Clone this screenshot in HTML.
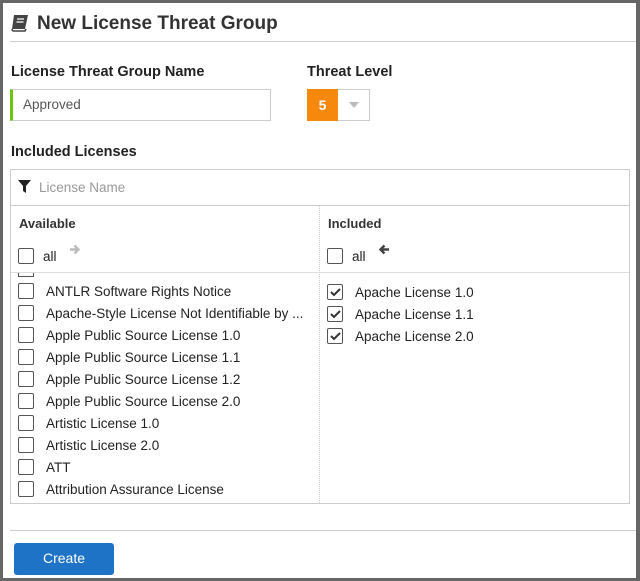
<!DOCTYPE html><html><head><style>
*{margin:0;padding:0;box-sizing:border-box}
body{width:640px;height:581px;background:#666;font-family:"Liberation Sans",sans-serif;color:#222;position:relative;overflow:hidden}
.p{position:absolute;left:3px;top:3px;width:633px;height:575px;background:#fff}
.a{position:absolute;white-space:nowrap}
.cb{position:absolute;width:16px;height:16px;border:1.5px solid #555;border-radius:2px;background:#fff}
.it{position:absolute;font-size:13.5px;color:#222;white-space:nowrap}
</style></head><body><div class="p"></div>
<svg class="a" style="left:10px;top:14px" width="19" height="18" viewBox="0 0 19 18"><path d="M4 1h14l-3 14H2z" fill="#444"/><path d="M2 15c0 2 1 2 2 2h11l1-2" fill="none" stroke="#444" stroke-width="1.6"/><path d="M7 5h7M6.5 8h7" stroke="#fff" stroke-width="1.3"/></svg>
<div class="a" style="left:37px;top:13px;font-size:19px;font-weight:bold;color:#333">New License Threat Group</div>
<div class="a" style="left:10px;top:41px;width:626px;height:1px;background:#ccc"></div>
<div class="a" style="left:11px;top:64px;font-size:14.5px;font-weight:bold;color:#222">License Threat Group Name</div>
<div class="a" style="left:307px;top:64px;font-size:14.5px;font-weight:bold;color:#222">Threat Level</div>
<div class="a" style="left:10px;top:89px;width:261px;height:32px;border:1px solid #ccc;border-left:3px solid #6cc417"></div>
<div class="a" style="left:23px;top:97px;font-size:13.5px;color:#555">Approved</div>
<div class="a" style="left:307px;top:89px;width:63px;height:32px;border:1px solid #ccc"></div>
<div class="a" style="left:307px;top:89px;width:31px;height:32px;background:#f7880e;color:#fff;font-weight:bold;font-size:14px;text-align:center;line-height:32px">5</div>
<div class="a" style="left:349px;top:102px;width:0;height:0;border-left:5px solid transparent;border-right:5px solid transparent;border-top:6px solid #bbb"></div>
<div class="a" style="left:11px;top:144px;font-size:14.5px;font-weight:bold;color:#222">Included Licenses</div>
<div class="a" style="left:10px;top:169px;width:620px;height:335px;border:1px solid #ccc"></div>
<div class="a" style="left:10px;top:205px;width:620px;height:1px;background:#ccc"></div>
<svg class="a" style="left:18px;top:180px" width="13" height="13" viewBox="0 0 13 13"><path d="M0 0h13L8 6v7L5 11V6z" fill="#222"/></svg>
<div class="a" style="left:39px;top:180px;font-size:13.5px;color:#999">License Name</div>
<div class="a" style="left:319px;top:206px;width:1px;height:297px;border-left:1px dotted #ccc"></div>
<div class="a" style="left:11px;top:272px;width:618px;height:1px;background:#ddd"></div>
<div class="a" style="left:19px;top:216px;font-size:13px;font-weight:bold;color:#333">Available</div>
<div class="a" style="left:328px;top:216px;font-size:13px;font-weight:bold;color:#333">Included</div>
<div class="cb" style="left:18px;top:248px"></div><div class="it" style="left:43px;top:249px">all</div>
<svg class="a" style="left:69px;top:244px" width="12" height="11" viewBox="0 0 12 11"><path d="M1 5.5h8M5.5 1.5l4 4-4 4" fill="none" stroke="#bbb" stroke-width="2.4"/></svg>
<div class="cb" style="left:327px;top:248px"></div><div class="it" style="left:352px;top:249px">all</div>
<svg class="a" style="left:378px;top:244px" width="12" height="11" viewBox="0 0 12 11"><path d="M11 5.5H3M6.5 1.5l-4 4 4 4" fill="none" stroke="#444" stroke-width="2.4"/></svg>
<div class="a" style="left:18px;top:273px;width:16px;height:4px;border:1.5px solid #555;border-top:none"></div>
<div class="cb" style="left:18px;top:283px"></div><div class="it" style="left:46px;top:284px">ANTLR Software Rights Notice</div>
<div class="cb" style="left:18px;top:305px"></div><div class="it" style="left:46px;top:306px">Apache-Style License Not Identifiable by ...</div>
<div class="cb" style="left:18px;top:327px"></div><div class="it" style="left:46px;top:328px">Apple Public Source License 1.0</div>
<div class="cb" style="left:18px;top:349px"></div><div class="it" style="left:46px;top:350px">Apple Public Source License 1.1</div>
<div class="cb" style="left:18px;top:371px"></div><div class="it" style="left:46px;top:372px">Apple Public Source License 1.2</div>
<div class="cb" style="left:18px;top:393px"></div><div class="it" style="left:46px;top:394px">Apple Public Source License 2.0</div>
<div class="cb" style="left:18px;top:415px"></div><div class="it" style="left:46px;top:416px">Artistic License 1.0</div>
<div class="cb" style="left:18px;top:437px"></div><div class="it" style="left:46px;top:438px">Artistic License 2.0</div>
<div class="cb" style="left:18px;top:459px"></div><div class="it" style="left:46px;top:460px">ATT</div>
<div class="cb" style="left:18px;top:481px"></div><div class="it" style="left:46px;top:482px">Attribution Assurance License</div>
<div class="cb" style="left:327px;top:284px"></div><div class="it" style="left:355px;top:285px">Apache License 1.0</div>
<div class="cb" style="left:327px;top:306px"></div><div class="it" style="left:355px;top:307px">Apache License 1.1</div>
<div class="cb" style="left:327px;top:328px"></div><div class="it" style="left:355px;top:329px">Apache License 2.0</div>
<svg class="a" style="left:327px;top:284px" width="16" height="60"><g fill="none" stroke="#333" stroke-width="2"><path d="M4 8l3 3 6-6"/><path d="M4 30l3 3 6-6"/><path d="M4 52l3 3 6-6"/></g></svg>
<div class="a" style="left:10px;top:530px;width:626px;height:1px;background:#ccc"></div>
<div class="a" style="left:14px;top:543px;width:100px;height:32px;background:#1f73c7;border-radius:3px;color:#fff;font-size:14px;text-align:center;line-height:31px">Create</div>
</body></html>
